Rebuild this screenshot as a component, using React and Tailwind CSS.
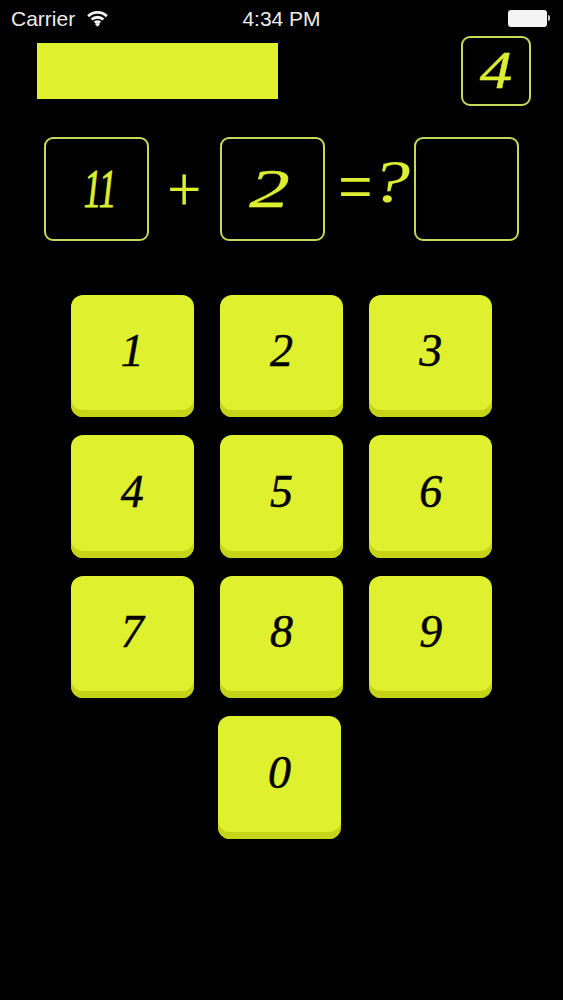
const KEYS = ["1", "2", "3", "4", "5", "6", "7", "8", "9"];

function WifiIcon() {
  return (
    <svg width="21" height="17" viewBox="0 0 21 17" fill="none" stroke="#f2f2f2" strokeWidth="2.8">
      <path d="M1.2 6.2a13.4 13.4 0 0 1 18.6 0" />
      <path d="M4.6 9.6a8.6 8.6 0 0 1 11.8 0" />
      <path d="M7.8 12.8a4 4 0 0 1 5.4 0" />
      <path d="M10.5 16.8l-2.4-2.6a3.2 3.2 0 0 1 4.8 0z" fill="#f2f2f2" stroke="none" />
    </svg>
  );
}

function StatusBar() {
  return (
    <div className="grid h-[36px] grid-cols-3 items-center px-[11px] font-['Liberation_Sans',sans-serif] text-[21px] leading-none text-[#ececec]">
      <div className="flex items-center gap-[12px]">
        <span>Carrier</span>
        <WifiIcon />
      </div>
      <span className="text-center whitespace-nowrap">4:34 PM</span>
      <div className="flex items-center justify-end pr-[2px]">
        <div className="h-[17px] w-[39px] rounded-[3px] bg-[#f4f4f4]" />
        <div className="ml-[1px] h-[6px] w-[2px] rounded-r-sm bg-[#cfcfcf]" />
      </div>
    </div>
  );
}

function Handwritten({ children, className }) {
  return (
    <span className={"inline-block font-['Liberation_Serif',serif] italic leading-none " + className}>
      {children}
    </span>
  );
}

function AnswerBox({ value, className = "" }) {
  return (
    <div className="flex h-[104px] w-[105px] items-center justify-center rounded-[9px] border-2 border-[#c5d959] text-[#dcee30]">
      <Handwritten className={"text-[54px] " + className}>{value}</Handwritten>
    </div>
  );
}

function Key({ label }) {
  return (
    <button
      type="button"
      className="flex h-[122.5px] w-[123px] items-center justify-center rounded-[12px] bg-[#dff02e] pb-[9px] text-black shadow-[inset_0_-7px_0_#c6d417]"
    >
      <Handwritten className="text-[46px] [-webkit-text-stroke:0.5px_#000]">{label}</Handwritten>
    </button>
  );
}

export default function App() {
  return (
    <div className="min-h-[1000px] w-full overflow-hidden bg-black">
      <StatusBar />

      <div className="flex items-start justify-between pl-[37px] pr-[32px]">
        <div className="mt-[7px] h-[56px] w-[241px] bg-[#dff02e]" />
        <div className="flex h-[70px] w-[70px] items-center justify-center rounded-[9px] border-2 border-[#c5d959] text-[#dcee30]">
          <Handwritten className="scale-x-125 text-[52px] [-webkit-text-stroke:0.4px_#dcee30]">4</Handwritten>
        </div>
      </div>

      <div className="mt-[31px] flex items-center pl-[44px] text-[#dcee30]">
        <AnswerBox value="11" className="translate-x-[3px] scale-x-[0.65] [-webkit-text-stroke:1px_#dcee30]" />
        <div className="w-[71px] text-center font-['Roboto',sans-serif] text-[58px] leading-none font-light">
          +
        </div>
        <AnswerBox value="2" className="-translate-x-[3px] scale-x-150 [-webkit-text-stroke:0.4px_#dcee30]" />
        <div className="flex w-[89px] items-center pl-[11px] font-['Roboto',sans-serif] text-[70px] leading-none font-light">
          <span className="-translate-y-[3px]">=</span>
          <Handwritten className="-translate-y-[8px] scale-x-125 text-[62px]">?</Handwritten>
        </div>
        <AnswerBox value="" />
      </div>

      <div className="mt-[53.5px] grid w-fit grid-cols-[123px_123px_123px] gap-x-[26.3px] gap-y-[18px] pl-[70.7px]">
        {KEYS.map((key) => (
          <Key key={key} label={key} />
        ))}
        <div className="col-start-2 -ml-[2px]">
          <Key label="0" />
        </div>
      </div>
    </div>
  );
}
